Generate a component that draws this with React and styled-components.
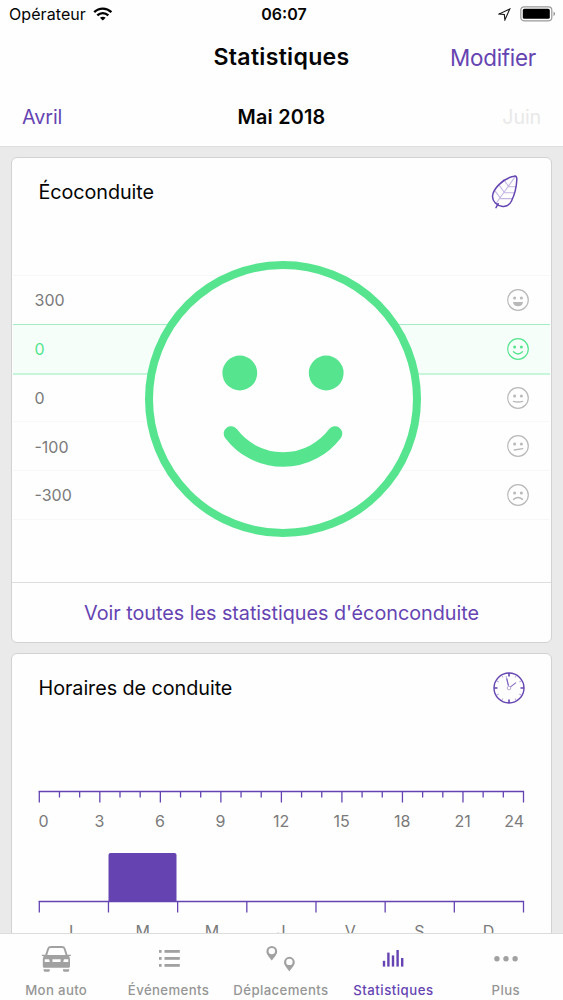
import React from 'react';
import styled, { createGlobalStyle } from 'styled-components';

const PURPLE = '#6544b2';
const GREEN = '#56e48f';
const GREY = '#a1a1a1';

const GlobalStyle = createGlobalStyle`
  * { box-sizing: border-box; }
  body { margin: 0; background: #eaeaea; overflow: hidden; }
`;

const Screen = styled.div`
  width: 563px;
  height: 1000px;
  display: flex;
  flex-direction: column;
  overflow: hidden;
  background: #eaeaea;
  color: #0b0b0b;
  font-family: Inter, 'Liberation Sans', sans-serif;
  svg { display: block; flex: none; }
`;

const Header = styled.header`
  flex: none;
  height: 147px;
  background: #fefefe;
  border-bottom: 1px solid #dedede;
`;

const ThreeColumns = styled.div`
  display: grid;
  grid-template-columns: 1fr auto 1fr;
  align-items: center;
  height: ${(p) => p.$height}px;
  padding: ${(p) => p.$padding};
`;

const Side = styled.div`
  display: flex;
  align-items: center;
  justify-content: ${(p) => (p.$end ? 'flex-end' : 'flex-start')};
  gap: ${(p) => p.$gap || 0}px;
`;

const Label = styled.span`
  font-size: ${(p) => p.$size}px;
  font-weight: ${(p) => p.$weight || 400};
  letter-spacing: ${(p) => p.$spacing || 0}px;
  color: ${(p) => p.$color || '#050505'};
  line-height: 1.2;
  white-space: nowrap;
  padding-top: ${(p) => p.$drop || 0}px;
`;

const Clock = styled(Label)`
  padding-left: 3px;
`;

const Content = styled.main`
  flex: 1;
  min-height: 0;
  overflow: hidden;
  padding: 10px 11px 0;
  display: flex;
  flex-direction: column;
  gap: 10px;
`;

const Card = styled.section`
  position: relative;
  flex: none;
  height: ${(p) => p.$height}px;
  display: flex;
  flex-direction: column;
  background: #fefefe;
  border: 1px solid #d2d2d2;
  border-radius: 6px;
`;

const CardHead = styled.div`
  flex: none;
  display: flex;
  align-items: center;
  justify-content: space-between;
  height: 68px;
  padding: 0 ${(p) => p.$right}px 0 26.5px;
`;

const Levels = styled.div`
  margin: 49px 1px 0;
  border-bottom: 1px solid #f7f7f7;
`;

const LevelRow = styled.div`
  display: flex;
  align-items: center;
  justify-content: space-between;
  height: 48.8px;
  padding: 0 20px 0 21.5px;
  border-top: ${(p) => (p.$afterActive ? '2px solid #c6f5da' : `1px solid ${p.$active ? '#a4ecc6' : '#f7f7f7'}`)};
  background: ${(p) => (p.$active ? '#f6fefa' : 'transparent')};
`;

const BigFaceOverlay = styled.div`
  position: absolute;
  top: 102px;
  left: 132px;
`;

const CardLink = styled.a`
  margin-top: auto;
  height: 60px;
  display: flex;
  align-items: center;
  justify-content: center;
  border-top: 1px solid #dedede;
`;

const ChartText = styled.text`
  font-size: 16px;
  fill: #7a7a7a;
`;

const ChartArea = styled.div`
  padding: 68px 0 0 26px;
`;

const TabBar = styled.nav`
  flex: none;
  height: 67px;
  display: grid;
  grid-template-columns: repeat(5, 1fr);
  padding-right: 1px;
  background: #fefefe;
  border-top: 1px solid #dcdcdc;
`;

const Tab = styled.div`
  display: flex;
  flex-direction: column;
  align-items: center;
  padding-top: 11px;
  gap: 10px;
`;

const WifiIcon = () => (
  <svg width="20" height="14" viewBox="0 0 20 14" fill="none" stroke="#000" strokeWidth="2.4">
    <path d="M1.2 5.2C6.2 .4 13.4 .4 18.4 5.2" />
    <path d="M4.3 8.4C7.5 5.4 12.1 5.4 15.3 8.4" />
    <path d="M9.8 13.6L6.9 10.7Q9.8 8.7 12.7 10.7Z" fill="#000" stroke="none" />
  </svg>
);

const LocationIcon = () => (
  <svg width="13" height="13" viewBox="0 0 13 13" fill="none" stroke="#111" strokeWidth="1.1" strokeLinejoin="miter">
    <path d="M11.8 .9L.9 6.1L6.3 6.5L6.9 11.9Z" />
  </svg>
);

const BatteryIcon = () => (
  <svg width="36" height="16" viewBox="0 0 36 16">
    <rect x=".8" y=".8" width="31" height="14" rx="3.2" fill="none" stroke="#999" strokeWidth="1.2" />
    <rect x="2.8" y="2.8" width="27" height="10" rx="1.6" fill="#000" />
    <path d="M33.5 5.4Q35.2 6.4 35.2 7.8Q35.2 9.2 33.5 10.2Z" fill="#999" />
  </svg>
);

const LeafIcon = () => (
  <svg width="30" height="36" viewBox="0 0 30 36" fill="none" strokeLinecap="round">
    <path d="M25.5 2.2L6 29.5M26 12.8H18.8L13.8 5.8M24.6 18.8H14.6L8.8 10.8M22 24.6H10.8L5.2 17.2" stroke="#c3b5e2" strokeWidth="1.1" />
    <path d="M24 2.2C26 1.7 27 3 26.8 5.8C26.5 13 24.5 21 21.5 27C19.5 31 16 33 11.8 32.2C6.8 31.4 2.6 27.5 2.5 22.5C2.6 15.5 12.5 4.6 24 2.2Z" stroke={PURPLE} strokeWidth="1.5" />
    <path d="M8.2 29.6L6 33.6" stroke={PURPLE} strokeWidth="1.5" />
  </svg>
);

const ClockIcon = () => (
  <svg width="32" height="32" viewBox="-16 -16 32 32" fill="none" stroke={PURPLE}>
    <circle r="15" strokeWidth="1.4" />
    <path d="M0 -15V-11.5M0 15V11.5M-15 0H-11.5M15 0H11.5" strokeWidth="1.6" />
    <g stroke="#b9a9de" strokeWidth="1">
      {[30, 60, 120, 150, 210, 240, 300, 330].map((a) => (
        <path key={a} d="M0 -14V-12" transform={`rotate(${a})`} />
      ))}
      <circle r="1.8" />
      <path d="M-.4 -2L-3 -12" />
    </g>
    <path d="M-.6 -2.4L-2.3 -9.5M1.5 -1.1L7 -5.4" strokeWidth="1.1" opacity=".8" />
  </svg>
);

const MOUTHS = {
  grin: <path d="M-5 2H5Q4.4 6.3 0 6.3Q-4.4 6.3 -5 2Z" fill="currentColor" stroke="none" />,
  smile: <path d="M-4.5 2.8Q0 7 4.5 2.8" />,
  slight: <path d="M-4.5 3.4Q0 4.7 4.5 3.4" />,
  doubt: <path d="M-3.7 4L4.7 2.6" />,
  sad: <path d="M-4.5 4.4Q0 .6 4.5 4.4" />,
};

const FaceIcon = ({ mood, color }) => (
  <svg width="24" height="24" viewBox="-12 -12 24 24" fill="none" stroke="currentColor" strokeLinecap="round" color={color}>
    <circle r="10.3" strokeWidth="1.2" />
    <circle cx="-3.4" cy="-2" r="1.5" fill="currentColor" stroke="none" />
    <circle cx="3.4" cy="-2" r="1.5" fill="currentColor" stroke="none" />
    <g strokeWidth="1.4">{MOUTHS[mood]}</g>
  </svg>
);

const BigFace = () => (
  <svg width="278" height="278" viewBox="-139 -139 278 278" fill="#fefefe">
    <circle r="134" stroke={GREEN} strokeWidth="8" />
    <circle cx="-43.2" cy="-26" r="17.4" fill={GREEN} />
    <circle cx="43.2" cy="-26" r="17.4" fill={GREEN} />
    <path d="M-52 34.5A65 65 0 0 0 52 34.5" fill="none" stroke={GREEN} strokeWidth="14.6" strokeLinecap="round" />
  </svg>
);

const CarIcon = () => (
  <svg width="32" height="28" viewBox="0 0 32 28" fill={GREY}>
    <path d="M6 10.6L8.2 3.8Q8.8 2 10.8 2H22Q24 2 24.6 3.8L26.8 10.6" fill="none" stroke={GREY} strokeWidth="1.9" />
    <path fillRule="evenodd" d="M1.6 9.8H5.2L5.6 10H27.2L27.6 9.8H31.2L30.6 11H29.2L30 14V21.2Q30 22.8 28.4 22.8H4.4Q2.8 22.8 2.8 21.2V14L3.6 11H2.2ZM4.7 14.2V16.9H9.9L9 14.2ZM12.5 14.2V16.9H20.6V14.2ZM24 14.2L23.2 16.9H28.3V14.2Z" />
    <path d="M3.6 24.2H9.8V25.4Q9.6 26.8 8.4 26.8H5Q3.8 26.8 3.6 25.4ZM23 24.2H29.2V25.4Q29 26.8 27.8 26.8H24.4Q23.2 26.8 23 25.4Z" />
  </svg>
);

const ListIcon = () => (
  <svg width="32" height="28" viewBox="0 0 32 28" fill={GREY}>
    {[5, 12, 19].map((y) => (
      <g key={y}>
        <rect x="6" y={y} width="2.6" height="2.8" />
        <rect x="11.5" y={y} width="15.3" height="2.8" />
      </g>
    ))}
  </svg>
);

const PinsIcon = () => (
  <svg width="32" height="28" viewBox="0 0 32 28" fill={GREY} fillRule="evenodd">
    <path id="pin" d="M6.8 1A5.4 5.4 0 0 1 12.2 6.4C12.2 9.5 9 12.4 6.8 15.6C4.6 12.4 1.4 9.5 1.4 6.4A5.4 5.4 0 0 1 6.8 1ZM6.8 2.9A3.2 3.2 0 1 0 6.8 9.3A3.2 3.2 0 1 0 6.8 2.9Z" />
    <use href="#pin" x="17.6" y="10.8" />
  </svg>
);

const BarsIcon = () => (
  <svg width="32" height="28" viewBox="0 0 32 28" fill={PURPLE}>
    <rect x="5.8" y="15.8" width="2.4" height="5.8" />
    <rect x="10.2" y="7.6" width="2.4" height="14" />
    <rect x="14.8" y="10.4" width="2.4" height="11.2" />
    <rect x="19.4" y="5" width="2.4" height="16.6" />
    <rect x="24" y="13" width="2.4" height="8.6" />
  </svg>
);

const DotsIcon = () => (
  <svg width="32" height="28" viewBox="0 0 32 28" fill={GREY}>
    <circle cx="6.9" cy="13.8" r="2.7" />
    <circle cx="16" cy="13.8" r="2.7" />
    <circle cx="25.1" cy="13.8" r="2.7" />
  </svg>
);

const LEVELS = [
  { value: '300', mood: 'grin' },
  { value: '0', mood: 'smile', active: true },
  { value: '0', mood: 'slight' },
  { value: '-100', mood: 'doubt' },
  { value: '-300', mood: 'sad' },
];

const DAYS = ['L', 'M', 'M', 'J', 'V', 'S', 'D'];

const TABS = [
  { name: 'Mon auto', icon: CarIcon, spacing: 0.35 },
  { name: 'Événements', icon: ListIcon, spacing: 0.4 },
  { name: 'Déplacements', icon: PinsIcon, spacing: 0.4 },
  { name: 'Statistiques', icon: BarsIcon, active: true, spacing: 0.5 },
  { name: 'Plus', icon: DotsIcon, spacing: 0.4 },
];

const AXIS_START = 1.3;
const AXIS_WIDTH = 484.2;

const HoursChart = () => {
  const hours = Array.from({ length: 25 }, (_, i) => i);
  const x = (h) => AXIS_START + (h / 24) * AXIS_WIDTH;
  return (
    <svg width="488" height="62" viewBox="0 0 488 62">
      <g stroke={PURPLE} strokeWidth="1.3">
        <path d={`M.6 1.5H${AXIS_START + AXIS_WIDTH + 0.6}`} />
        {hours.map((h) => (
          <path key={h} d={`M${x(h)} 1.5V${h % 3 ? 7.5 : 12.5}`} />
        ))}
      </g>
      {hours.filter((h) => h % 3 === 0).map((h) => (
        <ChartText
          key={h}
          x={h === 0 ? 0.4 : h === 24 ? 486 : x(h) - 0.3}
          y="37"
          textAnchor={h === 0 ? 'start' : h === 24 ? 'end' : 'middle'}
        >
          {h}
        </ChartText>
      ))}
    </svg>
  );
};

const DaysChart = () => {
  const x = (d) => AXIS_START + (d / 7) * AXIS_WIDTH;
  return (
    <svg width="488" height="100" viewBox="0 0 488 100">
      <path d="M70.5 49V3Q70.5 1 72.5 1H136.5Q138.5 1 138.5 3V49Z" fill={PURPLE} />
      <g stroke={PURPLE} strokeWidth="1.3">
        <path d={`M.6 49.5H${AXIS_START + AXIS_WIDTH + 0.6}`} />
        {[0, 1, 2, 3, 4, 5, 6, 7].map((d) => (
          <path key={d} d={`M${x(d)} 49.5V60.5`} />
        ))}
      </g>
      {DAYS.map((day, i) => (
        <ChartText key={i} x={x(i + 0.5) - 0.3} y="85" textAnchor="middle">{day}</ChartText>
      ))}
    </svg>
  );
};

export default function App() {
  return (
    <Screen>
      <GlobalStyle />
      <Header>
        <ThreeColumns $height={28} $padding="0 7px 0 9px">
          <Side $gap={7}>
            <Label $size={16} $spacing={0.08} $drop={2}>Opérateur</Label>
            <WifiIcon />
          </Side>
          <Clock $size={16} $weight={600} $drop={2}>06:07</Clock>
          <Side $end $gap={9}>
            <LocationIcon />
            <BatteryIcon />
          </Side>
        </ThreeColumns>
        <ThreeColumns $height={59} $padding="1px 27px 0">
          <Side />
          <Label $size={23.1} $weight={600} $spacing={0.3}>Statistiques</Label>
          <Side $end><Label $size={22.4} $spacing={-0.25} $drop={1} $color={PURPLE}>Modifier</Label></Side>
        </ThreeColumns>
        <ThreeColumns $height={61} $padding="0 22px">
          <Side><Label $size={19.8} $spacing={-0.1} $color={PURPLE}>Avril</Label></Side>
          <Label $size={19.8} $weight={600} $spacing={0.2}>Mai 2018</Label>
          <Side $end><Label $size={19.8} $spacing={-0.2} $color="#e9e9e9">Juin</Label></Side>
        </ThreeColumns>
      </Header>
      <Content>
        <Card $height={486}>
          <CardHead $right={31}>
            <Label $size={19.8} $spacing={-0.08} $drop={2}>Écoconduite</Label>
            <LeafIcon />
          </CardHead>
          <Levels>
            {LEVELS.map((l, i) => (
              <LevelRow key={i} $active={l.active} $afterActive={i > 0 && LEVELS[i - 1].active}>
                <Label $size={16} $drop={2} $color={l.active ? GREEN : '#7a7a7a'}>{l.value}</Label>
                <FaceIcon mood={l.mood} color={l.active ? GREEN : '#b9b9b9'} />
              </LevelRow>
            ))}
          </Levels>
          <BigFaceOverlay><BigFace /></BigFaceOverlay>
          <CardLink>
            <Label $size={19.8} $spacing={-0.03} $drop={2} $color={PURPLE}>Voir toutes les statistiques d'éconconduite</Label>
          </CardLink>
        </Card>
        <Card $height={330}>
          <CardHead $right={26}>
            <Label $size={19.8} $spacing={-0.06} $drop={2}>Horaires de conduite</Label>
            <ClockIcon />
          </CardHead>
          <ChartArea>
            <HoursChart />
            <DaysChart />
          </ChartArea>
        </Card>
      </Content>
      <TabBar>
        {TABS.map(({ name, icon: Icon, active, spacing }) => (
          <Tab key={name}>
            <Icon />
            <Label $size={13.2} $weight={500} $spacing={spacing} $color={active ? PURPLE : '#969696'}>{name}</Label>
          </Tab>
        ))}
      </TabBar>
    </Screen>
  );
}
